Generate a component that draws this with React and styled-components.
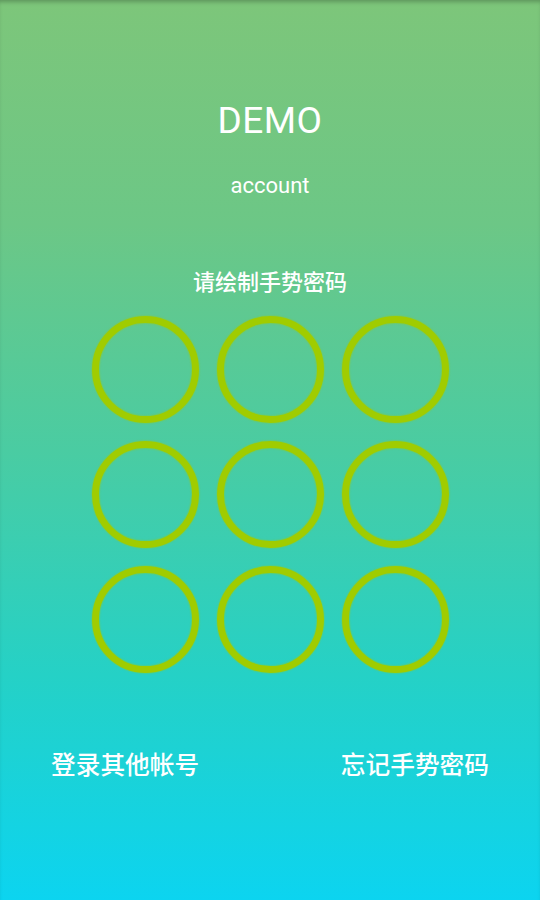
import React from "react";
import styled, { createGlobalStyle } from "styled-components";

const Global = createGlobalStyle`
  html, body {
    margin: 0;
    padding: 0;
  }
  body {
    font-family: Roboto, "Noto Sans CJK SC", sans-serif;
  }
`;

const Screen = styled.div`
  position: relative;
  width: 540px;
  height: 900px;
  display: flex;
  flex-direction: column;
  align-items: center;
  color: #fff;
  background: linear-gradient(180deg, #7dc67a 0%, #6cc786 25%, #4acca2 50%, #25d1c6 75%, #0cd4f0 100%);
  box-shadow: inset 0 4px 4px -2px rgba(0, 0, 0, 0.25);
  overflow: hidden;
`;

const Title = styled.h1`
  margin: 100px 0 0;
  font-size: 37px;
  line-height: 42px;
  font-weight: 400;
  letter-spacing: 0.5px;
`;

const Account = styled.div`
  margin-top: 31px;
  font-size: 22px;
  line-height: 26px;
`;

const Prompt = styled.div`
  margin-top: 67px;
  font-size: 22px;
  line-height: 28px;
  font-family: "Noto Sans CJK SC", sans-serif;
  font-weight: 500;
`;

const Grid = styled.div`
  margin-top: 22px;
  display: grid;
  grid-template-columns: repeat(3, 107px);
  grid-auto-rows: 107px;
  gap: 18px;
`;

const Dot = styled.div`
  box-sizing: border-box;
  border: 7px solid #a0cc00;
  border-radius: 50%;
  box-shadow: 0 0 2px rgba(160, 204, 0, 0.8), inset 0 0 2px rgba(160, 204, 0, 0.8);
`;

const Footer = styled.div`
  margin-top: 74px;
  width: 100%;
  box-sizing: border-box;
  padding: 0 51px;
  display: flex;
  justify-content: space-between;
`;

const Link = styled.span`
  font-family: "Noto Sans CJK SC", sans-serif;
  font-size: 24.7px;
  line-height: 32px;
  font-weight: 500;
`;

export default function App() {
  return (
    <>
      <Global />
      <Screen>
        <Title>DEMO</Title>
        <Account>account</Account>
        <Prompt>请绘制手势密码</Prompt>
        <Grid>
          {Array.from({ length: 9 }).map((_, i) => (
            <Dot key={i} />
          ))}
        </Grid>
        <Footer>
          <Link>登录其他帐号</Link>
          <Link>忘记手势密码</Link>
        </Footer>
      </Screen>
    </>
  );
}
